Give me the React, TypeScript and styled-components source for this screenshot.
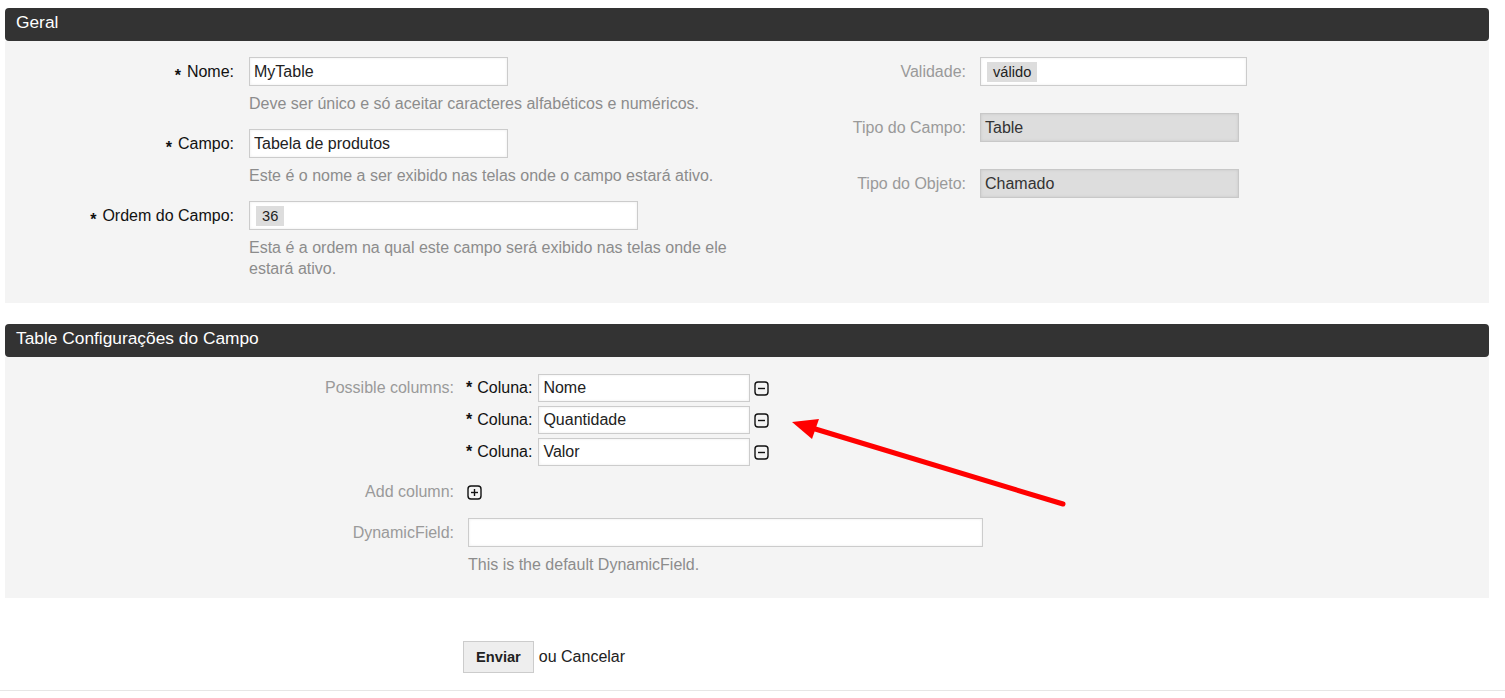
import React from 'react';
import styled, { createGlobalStyle } from 'styled-components';

const GlobalStyle = createGlobalStyle`
  html, body {
    margin: 0;
    padding: 0;
    background: #ffffff;
  }
  body {
    font-family: 'Liberation Sans', Arial, Helvetica, sans-serif;
    font-size: 16px;
    color: #111111;
  }
  * {
    box-sizing: border-box;
  }
`;

const Page = styled('div')`
  position: relative;
  width: 100%;
  min-height: 698px;
`;

const Main = styled('div')`
  padding: 8px 16px 0 5px;
`;

const Widget = styled('div')<{ $spaceAfter?: number }>`
  margin-bottom: ${(p) => p.$spaceAfter ?? 0}px;
`;

const WidgetHeader = styled('h2')`
  margin: 0;
  height: 33px;
  padding: 0 11px;
  background: #333333;
  border-radius: 4px;
  color: #ffffff;
  font-size: 17.33px;
  font-weight: normal;
  line-height: 29px;
`;

const WidgetContent = styled('div')<{ $top: number; $bottom: number }>`
  background: #f4f4f4;
  padding: ${(p) => p.$top}px 0 ${(p) => p.$bottom}px;
`;

const TwoColumns = styled('div')`
  display: grid;
  grid-template-columns: 742px 1fr;
`;

const FieldList = styled('div')<{ $gap: number }>`
  display: flex;
  flex-direction: column;
  gap: ${(p) => p.$gap}px;
`;

const FieldRow = styled('div')<{ $labelWidth: number; $gap: number }>`
  display: grid;
  grid-template-columns: ${(p) => p.$labelWidth}px 1fr;
  column-gap: ${(p) => p.$gap}px;
  align-items: start;
`;

const Label = styled('label')<{ $muted?: boolean; $height?: number }>`
  display: block;
  text-align: right;
  line-height: ${(p) => p.$height ?? 29}px;
  color: ${(p) => (p.$muted ? '#9a9a9a' : '#111111')};
  white-space: nowrap;
`;

const Marker = styled('span')<{ $space: number }>`
  display: inline-block;
  font-weight: bold;
  vertical-align: -4px;
  margin-right: ${(p) => p.$space}px;
  color: #111111;
`;

const FieldCell = styled('div')`
  display: flex;
  flex-direction: column;
  align-items: flex-start;
  min-width: 0;
`;

const TextInput = styled('input')<{ $width: number; $height?: number }>`
  width: ${(p) => p.$width}px;
  height: ${(p) => p.$height ?? 29}px;
  margin: 0;
  padding: 0 4px;
  border: 1px solid #cccccc;
  border-radius: 0;
  background: #ffffff;
  box-shadow: inset 0 0 3px rgba(0, 0, 0, 0.08);
  font-family: inherit;
  font-size: 16px;
  color: #222222;
  outline: none;
`;

const TagBox = styled('div')<{ $width: number }>`
  display: flex;
  align-items: center;
  width: ${(p) => p.$width}px;
  height: 29px;
  padding: 0 6px;
  border: 1px solid #cccccc;
  background: #ffffff;
  box-shadow: inset 0 0 3px rgba(0, 0, 0, 0.08);
`;

const Tag = styled('span')`
  display: inline-block;
  height: 20px;
  padding: 0 6px;
  background: #dddddd;
  font-size: 14.67px;
  line-height: 20px;
  color: #222222;
`;

const ReadOnlyBox = styled('div')`
  width: 259px;
  height: 29px;
  padding: 0 4px;
  border: 1px solid #c8c8c8;
  background: #dddddd;
  box-shadow: inset 0 0 3px rgba(0, 0, 0, 0.1);
  line-height: 27px;
  color: #333333;
`;

const Hint = styled('p')`
  margin: 7px 0 0;
  line-height: 21px;
  color: #8c8c8c;
`;

const ColumnStack = styled('div')`
  display: flex;
  flex-direction: column;
  gap: 4px;
`;

const ColumnRow = styled('div')`
  display: flex;
  align-items: center;
  height: 28px;
`;

const ColumnLabel = styled('span')`
  margin-right: 6px;
  line-height: 28px;
  color: #111111;
`;

const IconButton = styled('button')<{ $offset?: number }>`
  display: inline-flex;
  align-items: center;
  justify-content: center;
  width: 15px;
  height: 15px;
  margin: 0 0 0 ${(p) => p.$offset ?? 0}px;
  padding: 0;
  border: none;
  background: none;
  cursor: pointer;
`;

const ActionRow = styled('div')`
  display: flex;
  align-items: center;
  height: 28px;
`;

const FormFooter = styled('div')`
  display: flex;
  align-items: center;
  margin-top: 43px;
  padding: 0 0 17px 463px;
  border-bottom: 1px solid #e6e6e6;
`;

const SubmitButton = styled('button')`
  height: 32px;
  padding: 0 12px;
  border: 1px solid #cccccc;
  background: #eeeeee;
  font-family: inherit;
  font-size: 14.67px;
  font-weight: bold;
  color: #222222;
  cursor: pointer;
`;

const CancelText = styled('span')`
  margin-left: 5px;
  color: #222222;
`;

const Overlay = styled('svg')`
  position: absolute;
  left: 0;
  top: 0;
  pointer-events: none;
`;

const BoxIcon = ({ plus }: { plus?: boolean }) => (
  <svg width="15" height="15" viewBox="0 0 15 15">
    <rect x="1" y="1" width="13" height="13" rx="3" fill="none" stroke="#111" strokeWidth="1.4" />
    <line x1="4" y1="7.5" x2="11" y2="7.5" stroke="#111" strokeWidth="1.4" />
    {plus && <line x1="7.5" y1="4" x2="7.5" y2="11" stroke="#111" strokeWidth="1.4" />}
  </svg>
);

const columns = ['Nome', 'Quantidade', 'Valor'];

export default function App() {
  return (
    <Page>
      <GlobalStyle />
      <Main>
        <Widget $spaceAfter={21}>
          <WidgetHeader>Geral</WidgetHeader>
          <WidgetContent $top={16} $bottom={24}>
            <TwoColumns>
              <FieldList $gap={15}>
                <FieldRow $labelWidth={229} $gap={15}>
                  <Label>
                    <Marker $space={6}>*</Marker>Nome:
                  </Label>
                  <FieldCell>
                    <TextInput $width={259} value="MyTable" readOnly />
                    <Hint>Deve ser único e só aceitar caracteres alfabéticos e numéricos.</Hint>
                  </FieldCell>
                </FieldRow>
                <FieldRow $labelWidth={229} $gap={15}>
                  <Label>
                    <Marker $space={6}>*</Marker>Campo:
                  </Label>
                  <FieldCell>
                    <TextInput $width={259} value="Tabela de produtos" readOnly />
                    <Hint>Este é o nome a ser exibido nas telas onde o campo estará ativo.</Hint>
                  </FieldCell>
                </FieldRow>
                <FieldRow $labelWidth={229} $gap={15}>
                  <Label>
                    <Marker $space={6}>*</Marker>Ordem do Campo:
                  </Label>
                  <FieldCell>
                    <TagBox $width={389}>
                      <Tag>36</Tag>
                    </TagBox>
                    <Hint>
                      Esta é a ordem na qual este campo será exibido nas telas onde ele estará ativo.
                    </Hint>
                  </FieldCell>
                </FieldRow>
              </FieldList>

              <FieldList $gap={27}>
                <FieldRow $labelWidth={219} $gap={14}>
                  <Label $muted>Validade:</Label>
                  <FieldCell>
                    <TagBox $width={267}>
                      <Tag>válido</Tag>
                    </TagBox>
                  </FieldCell>
                </FieldRow>
                <FieldRow $labelWidth={219} $gap={14}>
                  <Label $muted>Tipo do Campo:</Label>
                  <FieldCell>
                    <ReadOnlyBox>Table</ReadOnlyBox>
                  </FieldCell>
                </FieldRow>
                <FieldRow $labelWidth={219} $gap={14}>
                  <Label $muted>Tipo do Objeto:</Label>
                  <FieldCell>
                    <ReadOnlyBox>Chamado</ReadOnlyBox>
                  </FieldCell>
                </FieldRow>
              </FieldList>
            </TwoColumns>
          </WidgetContent>
        </Widget>

        <Widget>
          <WidgetHeader>Table Configurações do Campo</WidgetHeader>
          <WidgetContent $top={17} $bottom={23}>
            <FieldList $gap={12}>
              <FieldRow $labelWidth={449} $gap={12}>
                <Label $muted $height={28}>
                  Possible columns:
                </Label>
                <ColumnStack>
                  {columns.map((name) => (
                    <ColumnRow key={name}>
                      <Marker $space={5}>*</Marker>
                      <ColumnLabel>Coluna:</ColumnLabel>
                      <TextInput $width={212} $height={28} value={name} readOnly />
                      <IconButton $offset={4} aria-label="Remover coluna">
                        <BoxIcon />
                      </IconButton>
                    </ColumnRow>
                  ))}
                </ColumnStack>
              </FieldRow>
              <FieldRow $labelWidth={449} $gap={13}>
                <Label $muted $height={28}>
                  Add column:
                </Label>
                <ActionRow>
                  <IconButton aria-label="Adicionar coluna">
                    <BoxIcon plus />
                  </IconButton>
                </ActionRow>
              </FieldRow>
              <FieldRow $labelWidth={449} $gap={14}>
                <Label $muted>DynamicField:</Label>
                <FieldCell>
                  <TextInput $width={515} value="" readOnly />
                  <Hint>This is the default DynamicField.</Hint>
                </FieldCell>
              </FieldRow>
            </FieldList>
          </WidgetContent>
        </Widget>
      </Main>

      <FormFooter>
        <SubmitButton>Enviar</SubmitButton>
        <CancelText>ou Cancelar</CancelText>
      </FormFooter>

      <Overlay width="1505" height="698" viewBox="0 0 1505 698">
        <line x1="1063" y1="504" x2="812" y2="428" stroke="#ff0000" strokeWidth="5" strokeLinecap="round" />
        <polygon points="792,422 819,419 812,439" fill="#ff0000" />
      </Overlay>
    </Page>
  );
}
